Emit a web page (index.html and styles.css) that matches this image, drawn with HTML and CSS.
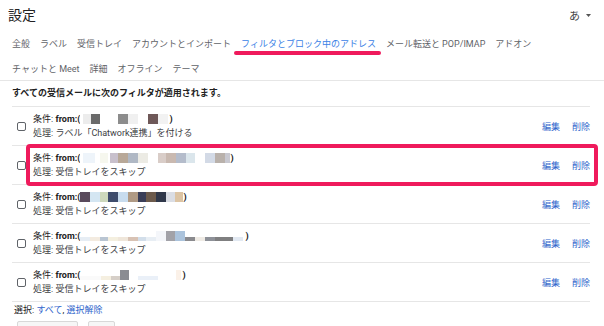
FILE: index.html
```html
<!DOCTYPE html>
<html lang="ja">
<head>
<meta charset="utf-8">
<link rel="stylesheet" href="styles.css">
</head>
<body>
<div class="header">
  <div class="title">設定</div>
  <div class="lang">あ<svg class="caret" width="5" height="3" viewBox="0 0 5 3"><path d="M0 0h5L2.5 3z" fill="#555"/></svg></div>
</div>
<div class="tabs">
  <div class="tabrow">
    <span class="tab">全般</span>
    <span class="tab">ラベル</span>
    <span class="tab">受信トレイ</span>
    <span class="tab">アカウントとインポート</span>
    <span class="tab active">フィルタとブロック中のアドレス</span>
    <span class="tab">メール転送と POP/IMAP</span>
    <span class="tab">アドオン</span>
  </div>
  <div class="tabrow second">
    <span class="tab">チャットと Meet</span>
    <span class="tab">詳細</span>
    <span class="tab">オフライン</span>
    <span class="tab">テーマ</span>
  </div>
</div>
<div class="heading">すべての受信メールに次のフィルタが適用されます。</div>
<div class="list">
  <div class="row">
    <span class="cb"></span>
    <div class="text">
      <div class="cond">条件: <b>from:(</b><span class="mask m1"></span><b>)</b></div>
      <div class="act">処理: ラベル「Chatwork連携」を付ける</div>
    </div>
    <div class="actions"><span>編集</span><span>削除</span></div>
  </div>
  <div class="row">
    <span class="cb"></span>
    <div class="text">
      <div class="cond">条件: <b>from:(</b><span class="mask m2"></span><b>)</b></div>
      <div class="act">処理: 受信トレイをスキップ</div>
    </div>
    <div class="actions"><span>編集</span><span>削除</span></div>
    <div class="highlight"></div>
  </div>
  <div class="row">
    <span class="cb"></span>
    <div class="text">
      <div class="cond">条件: <b>from:(</b><span class="mask m3"></span><b>)</b></div>
      <div class="act">処理: 受信トレイをスキップ</div>
    </div>
    <div class="actions"><span>編集</span><span>削除</span></div>
  </div>
  <div class="row">
    <span class="cb"></span>
    <div class="text">
      <div class="cond">条件: <b>from:(</b><span class="mask m4"></span><b>)</b></div>
      <div class="act">処理: 受信トレイをスキップ</div>
    </div>
    <div class="actions"><span>編集</span><span>削除</span></div>
  </div>
  <div class="row">
    <span class="cb"></span>
    <div class="text">
      <div class="cond">条件: <b>from:(</b><span class="mask m5"></span><b>)</b></div>
      <div class="act">処理: 受信トレイをスキップ</div>
    </div>
    <div class="actions"><span>編集</span><span>削除</span></div>
  </div>
</div>
<div class="sel">選択: <span class="link">すべて</span>, <span class="link">選択解除</span></div>
<div class="buttons">
  <span class="btn b1">エクスポート</span>
  <span class="btn b2">削除</span>
</div>
</body>
</html>
```
FILE: styles.css
```css
* { box-sizing: border-box; }
body {
  margin: 0;
  width: 604px;
  height: 326px;
  overflow: hidden;
  background: #fff;
  color: #222;
  font-family: Roboto, "Noto Sans CJK JP", sans-serif;
  font-size: 9px;
}
.header {
  display: flex;
  justify-content: space-between;
  align-items: center;
  height: 26px;
  padding: 4px 13px 0 8px;
}
.title {
  font-size: 14px;
  line-height: 22px;
  color: #222;
}
.lang {
  display: flex;
  align-items: center;
  gap: 6px;
  font-size: 11px;
  color: #444;
}
.tabs {
  padding: 5px 0 0 12px;
  border-bottom: 1px solid #e6e6e6;
}
.tabrow {
  display: flex;
  gap: 10px;
  height: 25px;
  align-items: center;
  color: #5f6368;
}
.tabrow.second { height: 24px; }
.tab { position: relative; white-space: nowrap; }
.tab.active { color: #3b82e6; }
.tab.active::after {
  content: "";
  position: absolute;
  left: -7px;
  right: -5px;
  top: 14px;
  height: 4px;
  border-radius: 2px;
  background: #ef1a5c;
}
.heading {
  height: 25px;
  line-height: 25px;
  padding-left: 12px;
  font-weight: bold;
  color: #222;
}
.list {
  margin: 0 14px 0 12px;
  border-top: 1px solid #e6e6e6;
}
.row {
  position: relative;
  display: flex;
  align-items: center;
  height: 39px;
  border-bottom: 1px solid #e6e6e6;
}
.cb {
  flex: none;
  width: 9px;
  height: 9px;
  margin: 0 7px 0 5px;
  border: 1px solid #5f6368;
  border-radius: 2px;
}
.text { flex: 1; line-height: 14px; }
.cond { color: #222; white-space: nowrap; }
.cond b { font-weight: bold; }
.act { color: #3c4043; }
.actions {
  display: flex;
  gap: 12px;
  color: #2f66cc;
}
.highlight {
  position: absolute;
  left: 14px;
  right: -8px;
  top: -2px;
  bottom: -2px;
  border: 4px solid #ef1a5c;
  border-radius: 4px;
}
.mask {
  display: inline-block;
  height: 10px;
  vertical-align: -2px;
}
.m1 {
  width: 89px;
  background: linear-gradient(to right,
    #fff 0 3px, #ececec 3px 11px, #6a6a6a 11px 20px, #fff 20px 38px,
    #8c8c8c 38px 48px, #f0f0f0 48px 58px, #fff 58px 68px,
    #6e5858 68px 78px, #f2f2f2 78px 88px, #fff 88px);
}
.m2 {
  width: 150px;
  background: linear-gradient(to right,
    #fff 0 3px, #eef4fa 3px 15px, #fff 15px 20px, #f6f7ee 20px 28px,
    #fff 28px 30px, #c8c0cc 30px 38px, #b8a898 38px 48px, #b0b8c4 48px 58px,
    #ecebe4 58px 68px, #fff 68px 78px, #d9cdc8 78px 86px, #c9b9b0 86px 96px,
    #b4bccb 96px 106px, #dbe6ec 106px 115px, #fff 115px 125px,
    #d3dae6 125px 135px, #b9b1ab 135px 145px, #c8c8d0 145px 150px);
}
.m3 {
  width: 103px;
  background: linear-gradient(to right,
    #5a4a5c 0 10px, #d4e6f2 10px 20px, #cdd8bc 20px 28px, #3e4c6c 28px 38px,
    #c8dcee 38px 48px, #b09a84 48px 58px, #3a3e58 58px 66px, #6c5a4c 66px 76px,
    #30384a 76px 86px, #dadde4 86px 95px, #dcc4a4 95px 103px);
}
.m4 {
  width: 165px;
  background:
    linear-gradient(to right, transparent 0 76px, #f4f6fa 76px 86px,
      #a2a2a8 86px 95px, #abc3dc 95px 105px, transparent 105px) 0 0 / 100% 100% no-repeat,
    linear-gradient(to right,
      #e6edf4 0 10px, #f3ebe0 10px 20px, #b9c5d2 20px 28px, #f4efdf 28px 38px,
      #efe6da 38px 48px, #d8c2b4 48px 58px, #d2deea 58px 66px, #e8eef4 66px 76px,
      #f4f6fa 76px 105px, #8a8a8e 105px 115px, #efebe5 115px 125px,
      #8e9198 125px 135px, #7f7f80 135px 153px, #e2e9f2 153px 163px, #fff 163px) 0 100% / 100% 4px no-repeat;
}
.m5 {
  width: 102px;
  background:
    linear-gradient(to right, transparent 0 40px, #8a8c92 40px 49px,
      transparent 49px 96px, #fbf1e8 96px 101px, transparent 101px) 0 0 / 100% 100% no-repeat,
    linear-gradient(to right,
      #fafafa 0 21px, #f5efe0 21px 31px, #d6cfc8 31px 40px, #fff 40px 58px,
      #eaf0f8 58px 78px, #fff 78px) 0 100% / 100% 4px no-repeat;
}
.sel {
  padding-left: 14px;
  line-height: 16px;
  color: #222;
}
.link { color: #2f66cc; }
.buttons {
  display: flex;
  gap: 10px;
  padding: 3px 0 0 17px;
}
.btn {
  height: 20px;
  border: 1px solid #d8d8d8;
  border-radius: 2px;
  background: #f6f6f6;
  color: #b0b0b0;
  text-align: center;
  line-height: 18px;
  padding-top: 2px;
}
.b1 { width: 61px; }
.b2 { width: 27px; }
```
